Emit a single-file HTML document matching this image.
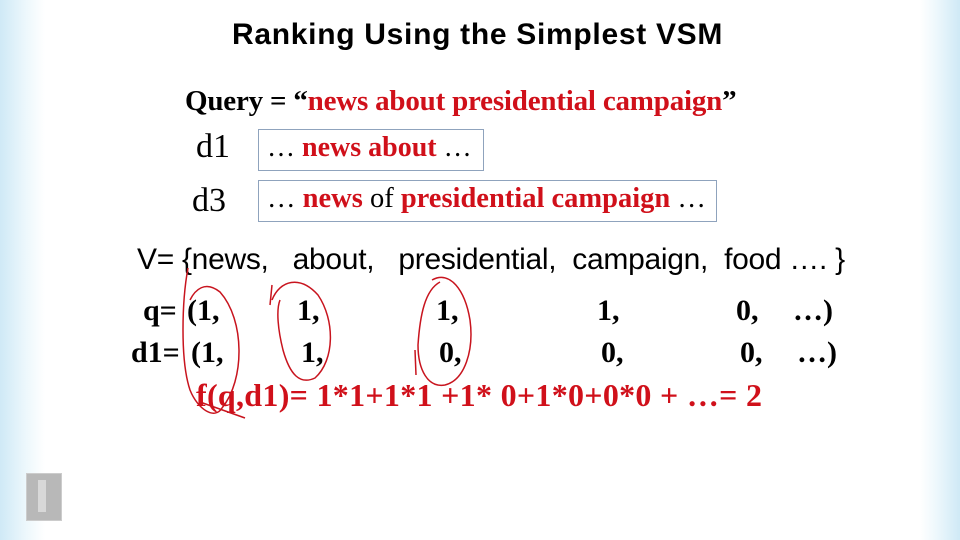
<!DOCTYPE html>
<html><head><style>
body{margin:0;width:960px;height:540px;overflow:hidden;background:#fff;position:relative;font-family:"Liberation Serif",serif}
.a{position:absolute;white-space:nowrap}
.r{color:#d0101a}
.b{font-weight:bold}
.box{position:absolute;border:1px solid #8fa3bd}
.edgeL{position:absolute;left:0;top:0;width:45px;height:540px;background:linear-gradient(90deg,#cfe9f6,#eef8fc 60%,#fff)}
.edgeR{position:absolute;right:0;top:0;width:40px;height:540px;background:linear-gradient(270deg,#cfe9f6,#eef8fc 60%,#fff)}
</style></head><body>
<div class="edgeL"></div><div class="edgeR"></div>
<div class="a b" style="left:232px;top:18px;font-family:'Liberation Sans',sans-serif;font-size:30px;letter-spacing:0.7px;color:#000">Ranking Using the Simplest VSM</div>
<div class="a b" style="left:185px;top:85px;font-size:29px;letter-spacing:-0.2px">Query = “<span class="r">news about presidential campaign</span>”</div>
<div class="a" style="left:196px;top:128px;font-size:34px">d1</div>
<div class="box" style="left:258px;top:129px;width:224px;height:40px"></div>
<div class="a" style="left:267px;top:132px;font-size:28px">… <span class="r b">news about</span> …</div>
<div class="a" style="left:192px;top:182px;font-size:34px">d3</div>
<div class="box" style="left:258px;top:180px;width:457px;height:40px"></div>
<div class="a" style="left:267px;top:183px;font-size:28.5px">… <span class="r b">news</span> of <span class="r b">presidential campaign</span> …</div>
<div class="a" style="left:137px;top:243px;font-family:'Liberation Sans',sans-serif;font-size:30px;letter-spacing:-0.3px">V= {news,&nbsp;&nbsp; about,&nbsp;&nbsp; presidential,&nbsp; campaign,&nbsp; food …. }</div>
<div class="b" style="font-size:30px">
<div class="a" style="left:143px;top:294px">q=</div>
<div class="a" style="left:187px;top:294px">(1,</div>
<div class="a" style="left:297px;top:294px">1,</div>
<div class="a" style="left:436px;top:294px">1,</div>
<div class="a" style="left:597px;top:294px">1,</div>
<div class="a" style="left:736px;top:294px">0,</div>
<div class="a" style="left:793px;top:294px">…)</div>
<div class="a" style="left:131px;top:336px">d1=</div>
<div class="a" style="left:191px;top:336px">(1,</div>
<div class="a" style="left:301px;top:336px">1,</div>
<div class="a" style="left:439px;top:336px">0,</div>
<div class="a" style="left:601px;top:336px">0,</div>
<div class="a" style="left:740px;top:336px">0,</div>
<div class="a" style="left:797px;top:336px">…)</div>
<div class="a r" style="left:196px;top:377px;font-size:32px;letter-spacing:0.3px">f(q,d1)= 1*1+1*1 +1* 0+1*0+0*0 + …= 2</div>
</div>
<svg class="a" style="left:0;top:0" width="960" height="540" fill="none" stroke="#c8141e" stroke-width="1.5">
<path d="M188 268 C182 300,180 360,190 390 C198 410,215 420,222 408 C245 380,245 320,220 292 C205 280,195 290,190 300"/>
<path d="M272 285 L270 305 M272 300 C280 280,300 275,318 295 C335 320,335 360,315 378 C300 385,290 375,283 350 C278 330,276 310,280 300"/>
<path d="M432 280 C450 270,465 290,470 320 C474 350,465 380,445 385 C428 388,418 370,418 345 C420 315,425 290,440 282"/>
<path d="M415 350 L416 375"/>
<path d="M200 402 L245 418"/>
</svg>
<div class="a" style="left:26px;top:473px;width:34px;height:46px;background:#b8b8b8;border:1px solid #ccc"></div>
<div class="a" style="left:38px;top:480px;width:8px;height:32px;background:#d8d8d8"></div>
</body></html>
